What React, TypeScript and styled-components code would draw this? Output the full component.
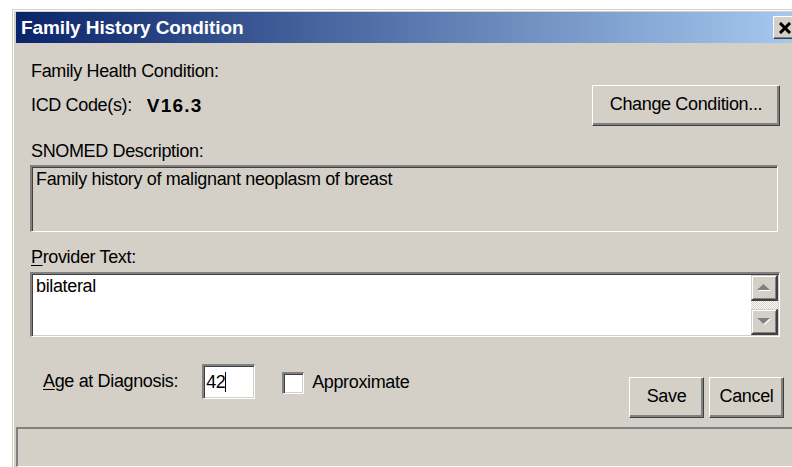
import React from "react";
import styled, { createGlobalStyle } from "styled-components";

const GlobalStyle = createGlobalStyle`
  html, body {
    margin: 0;
    padding: 0;
    background: #ffffff;
    overflow: hidden;
  }
  body {
    font-family: "Liberation Sans", Arial, sans-serif;
    font-size: 18px;
    letter-spacing: -0.35px;
    color: #000;
  }
`;

const Window = styled.div`
  box-sizing: border-box;
  width: 788px;
  height: 470px;
  margin: 9px 0 0 12px;
  padding: 2px 0 0 3px;
  background: #d4d0c8;
  border-top: 1px solid #d4d0c8;
  border-left: 1px solid #d4d0c8;
  box-shadow: inset 1px 1px #ffffff;
  display: flex;
  flex-direction: column;
`;

const TitleBar = styled.div`
  height: 31px;
  display: flex;
  align-items: center;
  justify-content: space-between;
  padding-left: 5px;
  background: linear-gradient(to right, #0a246a, #a6caf0);
`;

const Title = styled.span`
  color: #fff;
  font-weight: bold;
  font-size: 19px;
  letter-spacing: -0.1px;
`;

const CloseButton = styled.div`
  box-sizing: border-box;
  width: 23px;
  height: 23px;
  margin-right: 4px;
  display: flex;
  align-items: center;
  justify-content: center;
  background: #d4d0c8;
  border-top: 1px solid #fff;
  border-left: 1px solid #fff;
  border-right: 1px solid #404040;
  border-bottom: 1px solid #404040;
  box-shadow: inset -1px -1px #808080;
`;

const Body = styled.div`
  display: flex;
  flex-direction: column;
  padding: 0 20px 0 14px;
`;

const Label = styled.div<{ $top?: number; $indent?: number }>`
  line-height: 20px;
  margin-top: ${(p) => p.$top ?? 0}px;
  margin-left: ${(p) => p.$indent ?? 1}px;
  white-space: nowrap;
`;

const Row = styled.div<{ $top: number }>`
  display: flex;
  align-items: center;
  justify-content: space-between;
  margin-top: ${(p) => p.$top}px;
`;

const CodeGroup = styled.div`
  display: flex;
  align-items: center;
  margin-left: 1px;
`;

const Code = styled.span`
  font-weight: bold;
  font-size: 19px;
  letter-spacing: 1.2px;
  margin-left: 15px;
`;

const Button = styled.button<{ $width: number }>`
  box-sizing: border-box;
  width: ${(p) => p.$width}px;
  height: 41px;
  padding: 0 0 2px;
  font-family: inherit;
  font-size: 18px;
  letter-spacing: -0.35px;
  color: #000;
  background: #d4d0c8;
  border-top: 1px solid #fff;
  border-left: 1px solid #fff;
  border-right: 1px solid #404040;
  border-bottom: 1px solid #404040;
  box-shadow: inset -2px -2px #808080;
  border-radius: 0;
`;

const sunken = `
  border-top: 2px solid #808080;
  border-left: 2px solid #808080;
  border-right: 1px solid #ffffff;
  border-bottom: 1px solid #ffffff;
  box-shadow: inset 1px 1px #404040, inset -1px -1px #d4d0c8;
`;

const Field = styled.div<{ $height: number; $white?: boolean }>`
  box-sizing: border-box;
  height: ${(p) => p.$height}px;
  margin-top: 4px;
  padding: 2px 4px;
  line-height: 20px;
  background: ${(p) => (p.$white ? "#ffffff" : "#d4d0c8")};
  ${sunken}
`;

const Description = styled(Field)`
  width: calc(100% - 2px);
`;

const Memo = styled(Field)`
  position: relative;
  margin-top: 5px;
  padding-right: 32px;
`;

const ScrollBar = styled.div`
  position: absolute;
  top: 1px;
  right: 1px;
  bottom: 1px;
  width: 27px;
  display: flex;
  flex-direction: column;
`;

const ScrollButton = styled.div`
  box-sizing: border-box;
  height: 26px;
  display: flex;
  align-items: center;
  justify-content: center;
  background: #d4d0c8;
  border-top: 1px solid #d4d0c8;
  border-left: 1px solid #d4d0c8;
  border-right: 2px solid #404040;
  border-bottom: 2px solid #404040;
  box-shadow: inset 1px 1px #fff, inset -1px -1px #808080;
`;

const ScrollTrack = styled.div`
  flex: 1;
  background: repeating-conic-gradient(#ffffff 0 25%, #d4d0c8 0 50%) 0 0 / 2px 2px;
`;

const Underline = styled.span`
  text-decoration: underline;
  text-underline-offset: 2px;
`;

const BottomRow = styled.div`
  display: flex;
  justify-content: space-between;
  align-items: flex-start;
  margin-top: 27px;
`;

const AgeGroup = styled.div`
  display: flex;
  align-items: center;
  height: 35px;
  margin-left: 13px;
`;

const AgeInput = styled.div`
  box-sizing: border-box;
  width: 53px;
  height: 35px;
  margin-left: 24px;
  padding: 5px 2px;
  display: flex;
  align-items: center;
  line-height: 20px;
  background: #fff;
  ${sunken}
`;

const Caret = styled.span`
  display: inline-block;
  width: 1px;
  height: 20px;
  background: #000;
`;

const CheckBox = styled.div`
  box-sizing: border-box;
  width: 22px;
  height: 22px;
  margin: 2px 0 0 27px;
  background: #fff;
  ${sunken}
`;

const CheckLabel = styled.span`
  margin: 2px 0 0 8px;
`;

const ButtonGroup = styled.div`
  display: flex;
  gap: 5px;
  margin: 13px -4px 0 0;
`;

const StatusBar = styled.div`
  height: 37px;
  margin-top: 9px;
  border-top: 2px solid #808080;
  border-left: 2px solid #808080;
  border-bottom: 1px solid #ffffff;
`;

const Arrow = ({ up }: { up?: boolean }) => (
  <svg width="16" height="9" viewBox="0 0 16 9">
    {up ? (
      <>
        <polygon points="2,8 15,8 8.5,2" fill="#ffffff" />
        <polygon points="1,7 14,7 7.5,1" fill="#808080" />
      </>
    ) : (
      <>
        <polygon points="2,2 15,2 8.5,8" fill="#ffffff" />
        <polygon points="1,1 14,1 7.5,7" fill="#808080" />
      </>
    )}
  </svg>
);

export default function App() {
  return (
    <>
      <GlobalStyle />
      <Window>
        <TitleBar>
          <Title>Family History Condition</Title>
          <CloseButton>
            <svg width="14" height="12" viewBox="0 0 14 12">
              <path d="M2 1 L12 11 M12 1 L2 11" stroke="#000" strokeWidth="3" />
            </svg>
          </CloseButton>
        </TitleBar>
        <Body>
          <Label $top={18}>Family Health Condition:</Label>
          <Row $top={4}>
            <CodeGroup>
              <span>ICD Code(s):</span>
              <Code>V16.3</Code>
            </CodeGroup>
            <Button $width={188}>Change Condition...</Button>
          </Row>
          <Label $top={15}>SNOMED Description:</Label>
          <Description $height={67}>
            Family history of malignant neoplasm of breast
          </Description>
          <Label $top={15}>
            <Underline>P</Underline>rovider Text:
          </Label>
          <Memo $height={65} $white>
            bilateral
            <ScrollBar>
              <ScrollButton>
                <Arrow up />
              </ScrollButton>
              <ScrollTrack />
              <ScrollButton>
                <Arrow />
              </ScrollButton>
            </ScrollBar>
          </Memo>
          <BottomRow>
            <AgeGroup>
              <span>
                <Underline>A</Underline>ge at Diagnosis:
              </span>
              <AgeInput>
                42
                <Caret />
              </AgeInput>
              <CheckBox />
              <CheckLabel>Approximate</CheckLabel>
            </AgeGroup>
            <ButtonGroup>
              <Button $width={75}>Save</Button>
              <Button $width={75}>Cancel</Button>
            </ButtonGroup>
          </BottomRow>
        </Body>
        <StatusBar />
      </Window>
    </>
  );
}
